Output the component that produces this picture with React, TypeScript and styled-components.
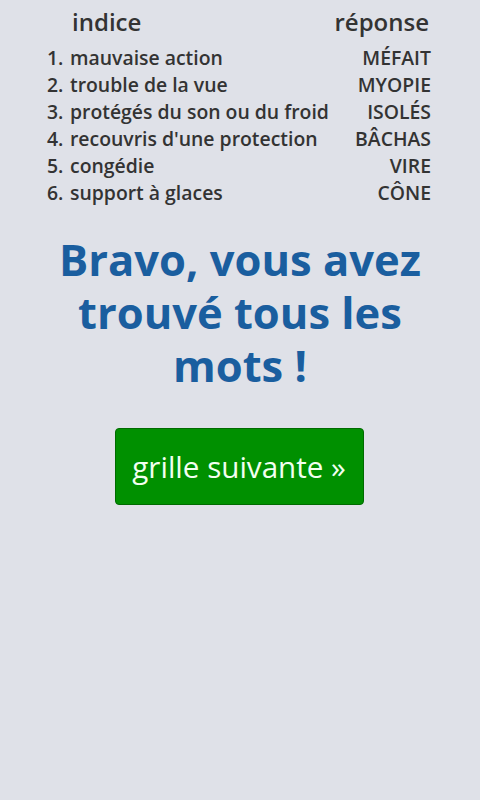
import React from "react";
import styled, { createGlobalStyle } from "styled-components";

const Global = createGlobalStyle`
  html, body { margin: 0; padding: 0; background: #dfe1e8; }
  body { font-family: "Open Sans", "DejaVu Sans", sans-serif; }
`;

const Page = styled.div`
  width: 480px;
  min-height: 800px;
  background: #dfe1e8;
  display: flex;
  flex-direction: column;
  align-items: center;
`;

const Table = styled.div`
  width: 384px;
  margin-top: 4px;
  margin-right: 2px;
  display: grid;
  grid-template-columns: 23px 1fr auto;
  color: #333333;
  font-weight: 600;
`;

const HeadCell = styled.div<{ $right?: boolean }>`
  font-size: 24px;
  line-height: 36px;
  height: 40px;
  text-align: ${(p) => (p.$right ? "right" : "left")};
  padding-left: ${(p) => (p.$right ? "0" : "2px")};
  padding-right: ${(p) => (p.$right ? "2px" : "0")};
`;

const Cell = styled.div<{ $right?: boolean }>`
  font-size: 19.4px;
  line-height: 27px;
  white-space: nowrap;
  text-align: ${(p) => (p.$right ? "right" : "left")};
`;

const Title = styled.h1`
  margin: 27px 0 0;
  width: 400px;
  text-align: center;
  color: #1a5e9f;
  font-size: 43.5px;
  line-height: 53px;
  font-weight: 700;
`;

const NextButton = styled.button`
  margin-top: 36px;
  margin-right: 2px;
  width: 249px;
  height: 77px;
  background: #009000;
  border: 1px solid #006b00;
  border-radius: 4px;
  color: #f2fff0;
  font-family: "Open Sans", "DejaVu Sans", sans-serif;
  font-size: 29.6px;
  font-weight: 400;
  cursor: pointer;
  padding: 0;
`;

const rows = [
  ["mauvaise action", "MÉFAIT"],
  ["trouble de la vue", "MYOPIE"],
  ["protégés du son ou du froid", "ISOLÉS"],
  ["recouvris d'une protection", "BÂCHAS"],
  ["congédie", "VIRE"],
  ["support à glaces", "CÔNE"],
];

export default function App() {
  return (
    <Page>
      <Global />
      <Table>
        <HeadCell />
        <HeadCell>indice</HeadCell>
        <HeadCell $right>réponse</HeadCell>
        {rows.map(([clue, ans], i) => (
          <React.Fragment key={i}>
            <Cell>{i + 1}.</Cell>
            <Cell>{clue}</Cell>
            <Cell $right>{ans}</Cell>
          </React.Fragment>
        ))}
      </Table>
      <Title>Bravo, vous avez trouvé tous les mots !</Title>
      <NextButton>grille suivante »</NextButton>
    </Page>
  );
}
